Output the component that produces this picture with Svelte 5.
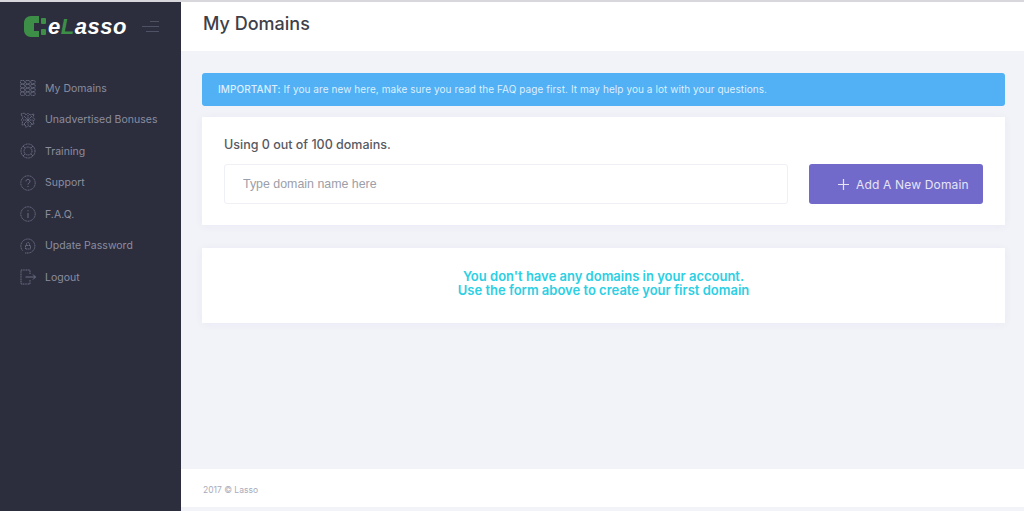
<script>
  const nav = [
    { label: "My Domains", icon: "grid" },
    { label: "Unadvertised Bonuses", icon: "burst" },
    { label: "Training", icon: "ring" },
    { label: "Support", icon: "help" },
    { label: "F.A.Q.", icon: "info" },
    { label: "Update Password", icon: "lock" },
    { label: "Logout", icon: "logout" }
  ];
  const cells = [0, 1, 2, 3];
</script>

<div class="page">
  <aside class="sidebar">
    <div class="brand">
      <svg class="logo" width="23" height="21" viewBox="0 0 23 21">
        <path d="M15 0H7C3 0 0 3 0 7v7c0 4 3 7 7 7h8v-6h-5V7h5z" fill="#3d8f47" />
        <rect x="17" y="2" width="5" height="6" rx="1" fill="#3d8f47" />
        <rect x="17" y="13" width="5" height="6" rx="1" fill="#3d8f47" />
      </svg>
      <span class="wordmark">e<span class="green">L</span>asso</span>
      <span class="burger"><i></i><i></i><i></i></span>
    </div>

    <nav>
      {#each nav as item}
        <a href="#top" class="nav-item">
          <svg width="16" height="16" viewBox="0 0 16 16" fill="none" stroke="#73768a" stroke-width="0.9" stroke-dasharray="1.2 0.5">
            {#if item.icon === "grid"}
              {#each cells as r}
                {#each cells.slice(0, 3) as c}
                  <rect x={0.5 + c * 5.2} y={0.5 + r * 3.9} width="4.2" height="3.2" rx="0.8" />
                {/each}
              {/each}
            {:else if item.icon === "burst"}
              <path d="M1 2l3.500-1 1.500 2 2-2 2 2 4-1-1 3.500 2 2-2 1.500 1 3-3 .5-.5 2.500-2.500-1.500-2 2-1-3-3 .5.5-3.500L1 8l2-2z" />
              <path d="M4 4l8 8M12 4l-8 8M8 3v10M3 8h10" />
            {:else if item.icon === "ring"}
              <circle cx="8" cy="8" r="7" />
              <circle cx="8" cy="8" r="4" />
              <path d="M3 3l2.2 2.2M13 3l-2.2 2.2M3 13l2.2-2.2M13 13l-2.2-2.2" />
            {:else if item.icon === "help"}
              <circle cx="8" cy="8" r="7.2" />
              <path d="M6 6.3C6 5 7 4.400 8 4.400s2 .8 2 1.900c0 1.600-2 1.700-2 3.200M8 11v1" stroke-dasharray="none" />
            {:else if item.icon === "info"}
              <circle cx="8" cy="8" r="7.2" />
              <path d="M8 7v5M8 4.300v1" stroke-dasharray="none" />
            {:else if item.icon === "lock"}
              <path d="M2.500 12.500A7 7 0 1 1 8 15h-3" />
              <path d="M5.500 11V7.500h5V11zM6.500 7.500V6a1.500 1.500 0 0 1 3 0v1.500" />
            {:else}
              <path d="M10 5V1H1v14h9v-4" />
              <path d="M5.500 8H15.500M13 5.500L15.500 8 13 10.500" stroke-dasharray="none" />
            {/if}
          </svg>
          <span>{item.label}</span>
        </a>
      {/each}
    </nav>
  </aside>

  <div class="right">
    <header class="topbar"><h1>My Domains</h1></header>

    <main>
      <div class="alert"><b>IMPORTANT:</b> If you are new here, make sure you read the FAQ page first. It may help you a lot with your questions.</div>

      <section class="card usage">
        <p class="using">Using 0 out of 100 domains.</p>
        <form class="add-form" on:submit|preventDefault>
          <input type="text" placeholder="Type domain name here" />
          <button type="submit">
            <svg width="13" height="13" viewBox="0 0 13 13" stroke="#e6e4f5" stroke-width="1.200"><path d="M6.500 1v11M1 6.500h11" /></svg>
            Add A New Domain
          </button>
        </form>
      </section>

      <section class="card empty">
        You don't have any domains in your account.<br />
        Use the form above to create your first domain
      </section>
    </main>

    <footer>2017 © Lasso</footer>
  </div>
</div>

<style>
  :global(body) {
    margin: 0;
    background: #f2f3f8;
  }
  .page {
    display: flex;
    height: 511px;
    overflow: hidden;
    font-family: Inter, "Noto Sans", sans-serif;
    background: #f2f3f8;
    border-top: 2px solid #d8d8dc;
    box-sizing: border-box;
  }
  .sidebar {
    width: 181px;
    flex: none;
    background: #2c2e3e;
  }
  .brand {
    display: flex;
    align-items: center;
    height: 49px;
    padding-left: 24px;
    box-sizing: border-box;
  }
  .logo {
    flex: none;
    margin-right: 1px;
  }
  .wordmark {
    font: italic 700 22px "Liberation Sans", sans-serif;
    letter-spacing: 0.5px;
    color: #fff;
  }
  .green {
    color: #3d8f47;
  }
  .burger {
    display: flex;
    flex-direction: column;
    align-items: flex-end;
    gap: 4px;
    margin-left: 15px;
    width: 17px;
  }
  .burger i {
    display: block;
    height: 1px;
    width: 9px;
    background: #4f5264;
  }
  .burger i:nth-child(2) {
    width: 17px;
  }
  .burger i:nth-child(3) {
    width: 13px;
  }
  nav {
    display: flex;
    flex-direction: column;
    gap: 11.500px;
    padding-top: 27px;
  }
  .nav-item {
    display: flex;
    align-items: center;
    gap: 9px;
    height: 20px;
    padding-left: 20px;
    font-size: 10.500px;
    letter-spacing: 0.02px;
    color: #8b8d9f;
    text-decoration: none;
  }
  .right {
    flex: 1;
    display: flex;
    flex-direction: column;
    min-width: 0;
  }
  .topbar {
    height: 49px;
    flex: none;
    box-sizing: border-box;
    background: #fff;
    padding: 11px 22px 0;
  }
  h1 {
    margin: 0;
    font-size: 18px;
    font-weight: 500;
    line-height: 22px;
    color: #3f4047;
  }
  main {
    flex: 1;
    padding: 22px 19px 0 21px;
  }
  .alert {
    height: 33px;
    box-sizing: border-box;
    padding: 0 16px;
    line-height: 32px;
    background: #52b0f5;
    border-radius: 3px;
    font-size: 10px;
    letter-spacing: 0.07px;
    color: #dceffd;
    white-space: nowrap;
  }
  .alert b {
    font-weight: 500;
  }
  .card {
    background: #fff;
    box-shadow: 0 1px 8px rgba(81, 77, 180, 0.06);
  }
  .usage {
    height: 108px;
    margin-top: 11px;
    padding: 20px 22px 0;
    box-sizing: border-box;
  }
  .using {
    margin: 0 0 11px;
    font-size: 12.500px;
    font-weight: 500;
    line-height: 16px;
    color: #575962;
  }
  .add-form {
    display: flex;
    justify-content: space-between;
  }
  input {
    width: 564px;
    height: 40px;
    box-sizing: border-box;
    border: 1px solid #eef0f5;
    border-radius: 3px;
    padding: 0 18px;
    font: 12.400px "Liberation Sans", sans-serif;
    outline: none;
  }
  input::placeholder {
    color: #9c9ea9;
    opacity: 1;
  }
  button {
    display: flex;
    align-items: center;
    gap: 6px;
    width: 174px;
    height: 40px;
    padding: 0 0 0 28px;
    box-sizing: border-box;
    border: none;
    border-radius: 3px;
    background: #716aca;
    color: #e6e4f5;
    font: 400 12px Inter, sans-serif;
    letter-spacing: 0.17px;
  }
  .empty {
    height: 75px;
    margin-top: 23px;
    box-sizing: border-box;
    padding-top: 21px;
    text-align: center;
    font-size: 13px;
    font-weight: 600;
    line-height: 14px;
    color: #2ccfe3;
  }
  footer {
    height: 38px;
    flex: none;
    margin-bottom: 4px;
    box-sizing: border-box;
    background: #fff;
    padding: 15px 22px 0;
    font-size: 8.500px;
    line-height: 12px;
    color: #a9abbb;
  }
</style>
